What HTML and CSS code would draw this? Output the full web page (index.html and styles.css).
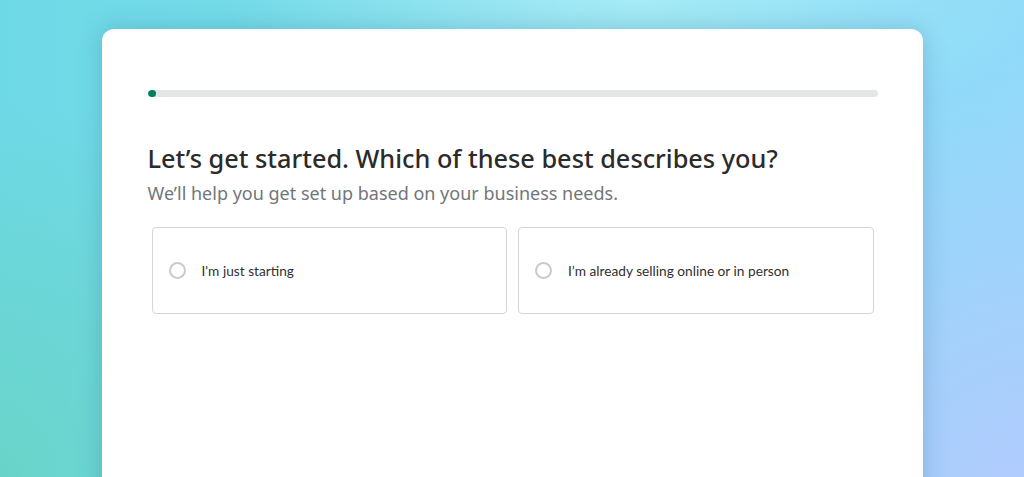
FILE: index.html
```html
<!DOCTYPE html>
<html lang="en">
<head>
  <meta charset="UTF-8">
  <title>Let's get started</title>
  <link rel="stylesheet" href="styles.css">
</head>
<body>

  <div class="page">
    <div class="panel">
      <div class="progress">
        <div class="progress-bar" style="width: 1%"></div>
      </div>

      <h1>Let’s get started. Which of these best describes you?</h1>
      <p class="subtitle">We’ll help you get set up based on your business needs.</p>

      <div class="choices">
        <label class="choice">
          <input type="radio" name="stage" value="starting">
          <span class="radio"></span>
          <span class="choice-label">I'm just starting</span>
        </label>
        <label class="choice">
          <input type="radio" name="stage" value="selling">
          <span class="radio"></span>
          <span class="choice-label">I’m already selling online or in person</span>
        </label>
      </div>
    </div>
  </div>

</body>
</html>
```

FILE: styles.css
```css
html, body {
  height: 100%;
}

body {
  margin: 0;
  font-family: "Noto Sans", "Open Sans", sans-serif;
  color: #303030;
  overflow: hidden;
  background:
    radial-gradient(ellipse 40% 30% at 62% 0%, rgba(170, 236, 246, 0.9), rgba(170, 236, 246, 0) 100%),
    radial-gradient(ellipse 45% 90% at 100% 100%, rgba(176, 203, 253, 1), rgba(176, 203, 253, 0) 100%),
    radial-gradient(ellipse 30% 80% at 0% 100%, rgba(104, 212, 200, 1), rgba(104, 212, 200, 0) 100%),
    linear-gradient(90deg, #6ed9e6 0%, #76dbe8 40%, #88dcf6 75%, #90daf9 100%);
}

.page {
  padding-top: 29px;
  height: 100%;
  box-sizing: border-box;
}

.panel {
  width: 821px;
  margin: 0 auto;
  min-height: 600px;
  background: #fff;
  border-radius: 12px;
  padding: 61px 45px 0 46px;
  box-sizing: border-box;
  box-shadow: 0 0 24px rgba(40, 90, 130, 0.25);
}

.progress {
  height: 7px;
  background: #e4e5e7;
  border-radius: 4px;
  overflow: hidden;
}

.progress-bar {
  height: 100%;
  min-width: 8px;
  background: #008060;
  border-radius: 4px;
}

h1 {
  margin: 45px 0 0;
  font-size: 25.3px;
  font-weight: 500;
  line-height: 32px;
  color: #2b2b2b;
}

.subtitle {
  margin: 6px 0 0;
  font-size: 18px;
  line-height: 26px;
  color: #72767a;
}

.choices {
  display: flex;
  gap: 11px;
  margin: 21px 4px 0;
}

.choice {
  flex: 1;
  display: flex;
  align-items: center;
  height: 87px;
  padding: 0 16px;
  box-sizing: border-box;
  border: 1px solid #d6d6d6;
  border-radius: 4px;
  cursor: pointer;
}

.choice input {
  display: none;
}

.radio {
  width: 17px;
  height: 17px;
  border: 2px solid #cacaca;
  border-radius: 50%;
  box-sizing: border-box;
  flex-shrink: 0;
}

.choice-label {
  margin-left: 16px;
  font-family: Lato, "Noto Sans", sans-serif;
  font-size: 13.7px;
  color: #303030;
}
```
